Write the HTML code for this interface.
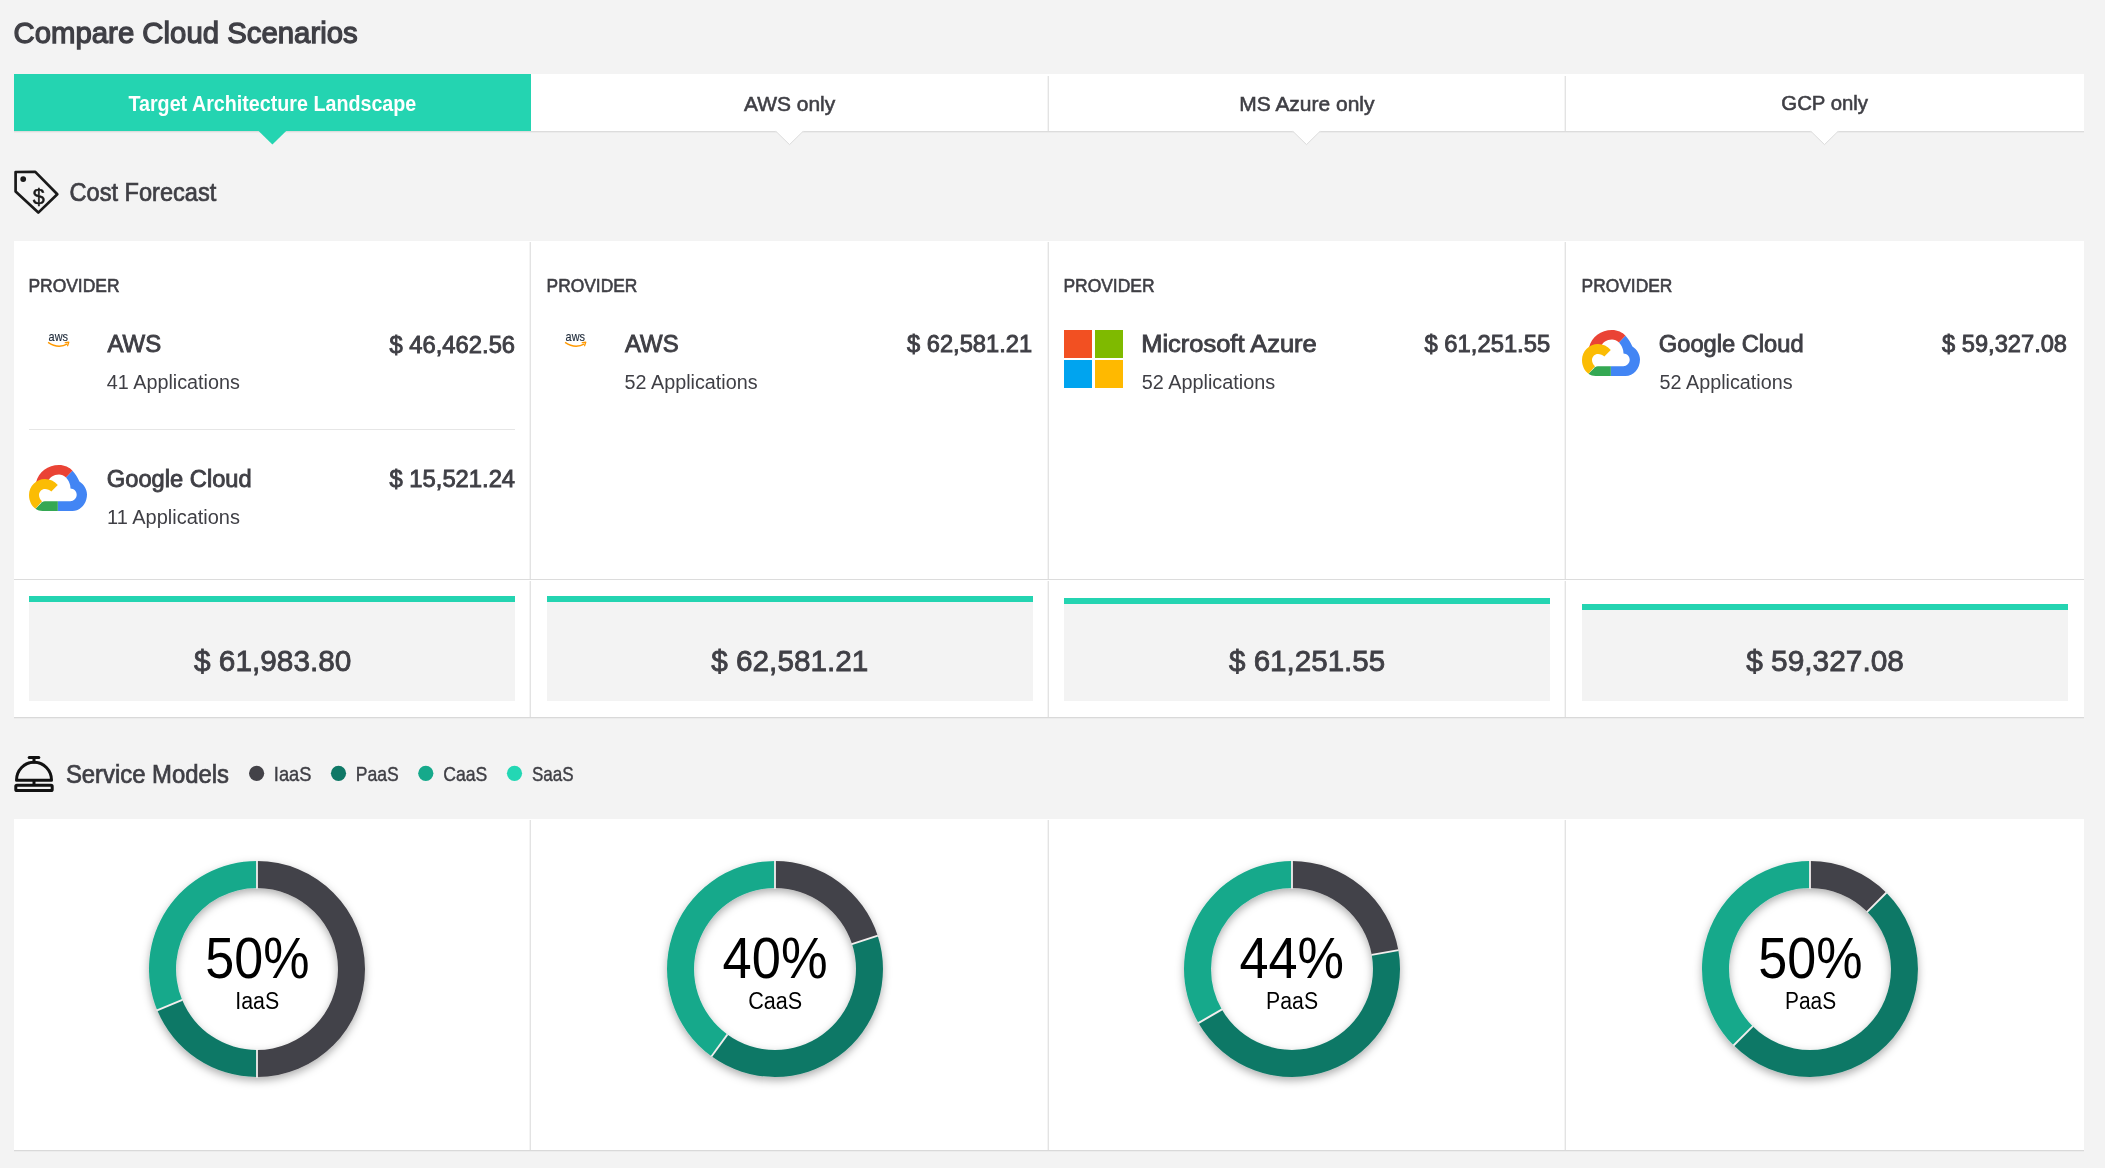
<!DOCTYPE html>
<html><head><meta charset="utf-8"><title>Compare Cloud Scenarios</title>
<style>html,body{margin:0;padding:0;background:#f3f3f3;overflow:hidden}svg{display:block;will-change:transform}text{font-family:"Liberation Sans",sans-serif}</style>
</head><body>
<svg width="2105" height="1168" viewBox="0 0 2105 1168">
<defs><filter id="ds" x="-20%" y="-20%" width="140%" height="140%"><feDropShadow dx="0" dy="3.5" stdDeviation="4" flood-color="#000" flood-opacity="0.32"/></filter></defs>
<rect width="2105" height="1168" fill="#f3f3f3"/>
<rect x="14" y="74" width="2070" height="57" fill="#fff"/>
<rect x="14" y="131" width="2070" height="1" fill="#dcdcdc"/>
<rect x="14" y="132" width="2070" height="1" fill="#ebebeb"/>
<rect x="14" y="74" width="517" height="57" fill="#24d4b1"/>
<rect x="1048" y="76" width="1" height="55" fill="#e3e3e3"/><rect x="1047" y="76" width="1" height="55" fill="#f4f4f4"/>
<rect x="1565" y="76" width="1" height="55" fill="#e3e3e3"/><rect x="1564" y="76" width="1" height="55" fill="#f4f4f4"/>
<path d="M258.6 131 L272.4 144.4 L286.2 131 Z" fill="#24d4b1"/>
<path d="M775.3 131 L789.5 144.6 L803.7 131 Z" fill="#fff"/>
<path d="M775.9 131.3 L789.5 144.6 L803.1 131.3" fill="none" stroke="#dcdcdc" stroke-width="1"/>
<path d="M1292.3 131 L1306.5 144.6 L1320.7 131 Z" fill="#fff"/>
<path d="M1292.9 131.3 L1306.5 144.6 L1320.1 131.3" fill="none" stroke="#dcdcdc" stroke-width="1"/>
<path d="M1810.3 131 L1824.5 144.6 L1838.7 131 Z" fill="#fff"/>
<path d="M1810.9 131.3 L1824.5 144.6 L1838.1 131.3" fill="none" stroke="#dcdcdc" stroke-width="1"/>
<g fill="none" stroke="#1a1a1a" stroke-width="2.7" stroke-linejoin="round"><path d="M15.6 172 L35.3 171.9 L57.3 194.2 L38.3 212.6 L15.6 191.4 Z"/></g>
<circle cx="23.2" cy="179.1" r="2.9" fill="#1a1a1a"/>
<text x="38.8" y="204.3" font-size="21.5" fill="#1a1a1a" text-anchor="middle" font-weight="normal" stroke="#1a1a1a" stroke-width="0.5">$</text>
<rect x="14" y="241" width="2070" height="476" fill="#fff"/>
<rect x="14" y="717" width="2070" height="1" fill="#d9d9d9"/>
<rect x="14" y="718" width="2070" height="1" fill="#ececec"/>
<rect x="530" y="242" width="1" height="337" fill="#e3e3e3"/><rect x="529" y="242" width="1" height="337" fill="#f4f4f4"/>
<rect x="530" y="581" width="1" height="136" fill="#e3e3e3"/><rect x="529" y="581" width="1" height="136" fill="#f4f4f4"/>
<rect x="1048" y="242" width="1" height="337" fill="#e3e3e3"/><rect x="1047" y="242" width="1" height="337" fill="#f4f4f4"/>
<rect x="1048" y="581" width="1" height="136" fill="#e3e3e3"/><rect x="1047" y="581" width="1" height="136" fill="#f4f4f4"/>
<rect x="1565" y="242" width="1" height="337" fill="#e3e3e3"/><rect x="1564" y="242" width="1" height="337" fill="#f4f4f4"/>
<rect x="1565" y="581" width="1" height="136" fill="#e3e3e3"/><rect x="1564" y="581" width="1" height="136" fill="#f4f4f4"/>
<rect x="14" y="579" width="2070" height="1" fill="#dcdcdc"/>
<rect x="29" y="429" width="486" height="1" fill="#e6e6e6"/>
<text x="48.6" y="340.7" font-size="13.2" fill="#232f3e" textLength="19.4" lengthAdjust="spacingAndGlyphs" stroke="#232f3e" stroke-width="0.15">aws</text>
<path d="M48.1 342.3 Q58.0 349.3 67.5 343.9" fill="none" stroke="#f90" stroke-width="1.5"/>
<path d="M65.2 342.6 L68.8 342.2 L67.6 345.8" fill="none" stroke="#f90" stroke-width="1.2" stroke-linecap="round" stroke-linejoin="round"/>
<text x="565.6" y="340.7" font-size="13.2" fill="#232f3e" textLength="19.4" lengthAdjust="spacingAndGlyphs" stroke="#232f3e" stroke-width="0.15">aws</text>
<path d="M565.1 342.3 Q575.0 349.3 584.5 343.9" fill="none" stroke="#f90" stroke-width="1.5"/>
<path d="M582.2 342.6 L585.8 342.2 L584.6 345.8" fill="none" stroke="#f90" stroke-width="1.2" stroke-linecap="round" stroke-linejoin="round"/>
<rect x="1064" y="330" width="28" height="28" fill="#f25022"/>
<rect x="1095" y="330" width="28" height="28" fill="#7fba00"/>
<rect x="1064" y="360" width="28" height="28" fill="#00a4ef"/>
<rect x="1095" y="360" width="28" height="28" fill="#ffb900"/>
<g transform="translate(29.0 465.0)"><path d="M7 17.5 C9.5 7 19 0 30 0 C35.5 0 40.5 2.2 43.5 5.8 L37 12.4 C35 10.5 32.5 9.5 30 9.5 C24.5 9.5 20.5 12.5 19 16.5 Z" fill="#ea4335"/><path d="M43.5 5.8 C46.5 9 48.5 12.5 50.4 16.5 C55 19.5 58 24.3 58 29.5 C58 38.5 51.5 46 43.5 46 L28.8 46 L28.8 36.2 L41.3 36.2 C44.8 36.2 47.7 33.3 47.7 29.8 C47.7 26.3 44.8 23.5 41.5 23.5 L41.2 20.5 C40.5 17.2 39 14.5 37 12.4 Z" fill="#4285f4"/><path d="M28.8 46 L13.5 46 C11 46 8.5 45.3 6.5 43.8 L13 37.3 C13.8 36.6 14.8 36.2 16 36.2 L28.8 36.2 Z" fill="#34a853"/><path d="M6.5 43.8 C2.5 40.8 0 35.8 0 30 C0 21.2 7.2 14 16 14 C21 14 25.5 16.3 28.8 20 L22.3 26.6 C20.8 24.9 18.5 24 16 24 C12.7 24 10 26.7 10 30 C10 32.6 11.3 34.8 13 36.2 Z" fill="#fbbc04"/></g>
<g transform="translate(1582.0 330.0)"><path d="M7 17.5 C9.5 7 19 0 30 0 C35.5 0 40.5 2.2 43.5 5.8 L37 12.4 C35 10.5 32.5 9.5 30 9.5 C24.5 9.5 20.5 12.5 19 16.5 Z" fill="#ea4335"/><path d="M43.5 5.8 C46.5 9 48.5 12.5 50.4 16.5 C55 19.5 58 24.3 58 29.5 C58 38.5 51.5 46 43.5 46 L28.8 46 L28.8 36.2 L41.3 36.2 C44.8 36.2 47.7 33.3 47.7 29.8 C47.7 26.3 44.8 23.5 41.5 23.5 L41.2 20.5 C40.5 17.2 39 14.5 37 12.4 Z" fill="#4285f4"/><path d="M28.8 46 L13.5 46 C11 46 8.5 45.3 6.5 43.8 L13 37.3 C13.8 36.6 14.8 36.2 16 36.2 L28.8 36.2 Z" fill="#34a853"/><path d="M6.5 43.8 C2.5 40.8 0 35.8 0 30 C0 21.2 7.2 14 16 14 C21 14 25.5 16.3 28.8 20 L22.3 26.6 C20.8 24.9 18.5 24 16 24 C12.7 24 10 26.7 10 30 C10 32.6 11.3 34.8 13 36.2 Z" fill="#fbbc04"/></g>
<rect x="29" y="596" width="486" height="105" fill="#f3f3f3"/>
<rect x="29" y="596" width="486" height="6" fill="#24d4b1"/>
<rect x="547" y="596" width="486" height="105" fill="#f3f3f3"/>
<rect x="547" y="596" width="486" height="6" fill="#24d4b1"/>
<rect x="1064" y="598" width="486" height="103" fill="#f3f3f3"/>
<rect x="1064" y="598" width="486" height="6" fill="#24d4b1"/>
<rect x="1582" y="604" width="486" height="97" fill="#f3f3f3"/>
<rect x="1582" y="604" width="486" height="6" fill="#24d4b1"/>
<g fill="none" stroke="#111" stroke-width="3" stroke-linecap="round" stroke-linejoin="round"><path d="M29.2 757.5 H38.8"/><path d="M34 758 V762"/><path d="M16.5 780.2 A17.5 18 0 0 1 51.5 780.2 Z"/><path d="M34 781.5 V784.5"/><rect x="15.8" y="785.3" width="36.4" height="5.3" rx="1.2"/></g>
<circle cx="256.6" cy="773.3" r="7.6" fill="#434248"/>
<circle cx="338.5" cy="773.3" r="7.6" fill="#0f7866"/>
<circle cx="425.8" cy="773.3" r="7.6" fill="#16a98b"/>
<circle cx="514.5" cy="773.3" r="7.6" fill="#23d7b4"/>
<rect x="14" y="819" width="2070" height="331" fill="#fff"/>
<rect x="14" y="1150" width="2070" height="1" fill="#d9d9d9"/>
<rect x="14" y="1151" width="2070" height="1" fill="#ececec"/>
<rect x="530" y="820" width="1" height="330" fill="#e3e3e3"/><rect x="529" y="820" width="1" height="330" fill="#f4f4f4"/>
<rect x="1048" y="820" width="1" height="330" fill="#e3e3e3"/><rect x="1047" y="820" width="1" height="330" fill="#f4f4f4"/>
<rect x="1565" y="820" width="1" height="330" fill="#e3e3e3"/><rect x="1564" y="820" width="1" height="330" fill="#f4f4f4"/>
<g filter="url(#ds)"><path d="M257.00 861.00 A108 108 0 0 1 257.00 1077.00 L257.00 1050.00 A81 81 0 0 0 257.00 888.00 Z" fill="#434248"/><path d="M257.00 1077.00 A108 108 0 0 1 157.22 1010.33 L182.17 1000.00 A81 81 0 0 0 257.00 1050.00 Z" fill="#0f7866"/><path d="M157.22 1010.33 A108 108 0 0 1 257.00 861.00 L257.00 888.00 A81 81 0 0 0 182.17 1000.00 Z" fill="#16a98b"/><line x1="257.00" y1="888.20" x2="257.00" y2="860.80" stroke="#f3eeee" stroke-width="1.8"/><line x1="257.00" y1="1049.80" x2="257.00" y2="1077.20" stroke="#f3eeee" stroke-width="1.8"/><line x1="182.35" y1="999.92" x2="157.04" y2="1010.41" stroke="#f3eeee" stroke-width="1.8"/></g>
<g filter="url(#ds)"><path d="M775.00 861.00 A108 108 0 0 1 877.71 935.63 L852.04 943.97 A81 81 0 0 0 775.00 888.00 Z" fill="#434248"/><path d="M877.71 935.63 A108 108 0 0 1 711.52 1056.37 L727.39 1034.53 A81 81 0 0 0 852.04 943.97 Z" fill="#0f7866"/><path d="M711.52 1056.37 A108 108 0 0 1 775.00 861.00 L775.00 888.00 A81 81 0 0 0 727.39 1034.53 Z" fill="#16a98b"/><line x1="775.00" y1="888.20" x2="775.00" y2="860.80" stroke="#f3eeee" stroke-width="1.8"/><line x1="851.85" y1="944.03" x2="877.90" y2="935.56" stroke="#f3eeee" stroke-width="1.8"/><line x1="727.51" y1="1034.37" x2="711.40" y2="1056.54" stroke="#f3eeee" stroke-width="1.8"/></g>
<g filter="url(#ds)"><path d="M1292.00 861.00 A108 108 0 0 1 1398.36 950.25 L1371.77 954.93 A81 81 0 0 0 1292.00 888.00 Z" fill="#434248"/><path d="M1398.36 950.25 A108 108 0 0 1 1198.47 1023.00 L1221.85 1009.50 A81 81 0 0 0 1371.77 954.93 Z" fill="#0f7866"/><path d="M1198.47 1023.00 A108 108 0 0 1 1292.00 861.00 L1292.00 888.00 A81 81 0 0 0 1221.85 1009.50 Z" fill="#16a98b"/><line x1="1292.00" y1="888.20" x2="1292.00" y2="860.80" stroke="#f3eeee" stroke-width="1.8"/><line x1="1371.57" y1="954.97" x2="1398.56" y2="950.21" stroke="#f3eeee" stroke-width="1.8"/><line x1="1222.03" y1="1009.40" x2="1198.30" y2="1023.10" stroke="#f3eeee" stroke-width="1.8"/></g>
<g filter="url(#ds)"><path d="M1810.00 861.00 A108 108 0 0 1 1886.37 892.63 L1867.28 911.72 A81 81 0 0 0 1810.00 888.00 Z" fill="#434248"/><path d="M1886.37 892.63 A108 108 0 0 1 1733.63 1045.37 L1752.72 1026.28 A81 81 0 0 0 1867.28 911.72 Z" fill="#0f7866"/><path d="M1733.63 1045.37 A108 108 0 0 1 1810.00 861.00 L1810.00 888.00 A81 81 0 0 0 1752.72 1026.28 Z" fill="#16a98b"/><line x1="1810.00" y1="888.20" x2="1810.00" y2="860.80" stroke="#f3eeee" stroke-width="1.8"/><line x1="1867.13" y1="911.87" x2="1886.51" y2="892.49" stroke="#f3eeee" stroke-width="1.8"/><line x1="1752.87" y1="1026.13" x2="1733.49" y2="1045.51" stroke="#f3eeee" stroke-width="1.8"/></g>
<text x="13.50" y="43.25" font-size="30.38" font-weight="normal" fill="#3f3f45" stroke="#3f3f45" stroke-width="1.30" textLength="344.20" lengthAdjust="spacingAndGlyphs">Compare Cloud Scenarios</text>
<text x="128.44" y="110.60" font-size="21.95" font-weight="bold" fill="#ffffff" textLength="287.85" lengthAdjust="spacingAndGlyphs">Target Architecture Landscape</text>
<text x="744.00" y="110.60" font-size="21.08" font-weight="normal" fill="#3f3f45" stroke="#3f3f45" stroke-width="0.60" textLength="91.18" lengthAdjust="spacingAndGlyphs">AWS only</text>
<text x="1239.28" y="110.50" font-size="21.08" font-weight="normal" fill="#3f3f45" stroke="#3f3f45" stroke-width="0.60" textLength="135.19" lengthAdjust="spacingAndGlyphs">MS Azure only</text>
<text x="1781.32" y="110.40" font-size="21.08" font-weight="normal" fill="#3f3f45" stroke="#3f3f45" stroke-width="0.60" textLength="86.70" lengthAdjust="spacingAndGlyphs">GCP only</text>
<text x="69.56" y="201.45" font-size="25.00" font-weight="normal" fill="#3f3f45" stroke="#3f3f45" stroke-width="0.70" textLength="146.75" lengthAdjust="spacingAndGlyphs">Cost Forecast</text>
<text x="28.38" y="291.70" font-size="19.04" font-weight="normal" fill="#3f3f45" stroke="#3f3f45" stroke-width="0.60" textLength="91.21" lengthAdjust="spacingAndGlyphs">PROVIDER</text>
<text x="546.56" y="291.70" font-size="19.04" font-weight="normal" fill="#3f3f45" stroke="#3f3f45" stroke-width="0.60" textLength="90.84" lengthAdjust="spacingAndGlyphs">PROVIDER</text>
<text x="1063.38" y="291.70" font-size="19.04" font-weight="normal" fill="#3f3f45" stroke="#3f3f45" stroke-width="0.60" textLength="91.21" lengthAdjust="spacingAndGlyphs">PROVIDER</text>
<text x="1581.56" y="291.70" font-size="19.04" font-weight="normal" fill="#3f3f45" stroke="#3f3f45" stroke-width="0.60" textLength="90.84" lengthAdjust="spacingAndGlyphs">PROVIDER</text>
<text x="107.54" y="352.35" font-size="24.42" font-weight="normal" fill="#3f3f45" stroke="#3f3f45" stroke-width="0.90" textLength="53.65" lengthAdjust="spacingAndGlyphs">AWS</text>
<text x="625.02" y="352.35" font-size="24.42" font-weight="normal" fill="#3f3f45" stroke="#3f3f45" stroke-width="0.90" textLength="53.61" lengthAdjust="spacingAndGlyphs">AWS</text>
<text x="1141.22" y="352.35" font-size="24.42" font-weight="normal" fill="#3f3f45" stroke="#3f3f45" stroke-width="0.90" textLength="175.47" lengthAdjust="spacingAndGlyphs">Microsoft Azure</text>
<text x="1658.82" y="352.35" font-size="24.42" font-weight="normal" fill="#3f3f45" stroke="#3f3f45" stroke-width="0.90" textLength="144.81" lengthAdjust="spacingAndGlyphs">Google Cloud</text>
<text x="106.86" y="487.35" font-size="24.42" font-weight="normal" fill="#3f3f45" stroke="#3f3f45" stroke-width="0.90" textLength="144.80" lengthAdjust="spacingAndGlyphs">Google Cloud</text>
<text x="106.84" y="388.80" font-size="19.91" font-weight="normal" fill="#3f3f45" textLength="133.08" lengthAdjust="spacingAndGlyphs">41 Applications</text>
<text x="624.60" y="388.80" font-size="19.91" font-weight="normal" fill="#3f3f45" textLength="133.03" lengthAdjust="spacingAndGlyphs">52 Applications</text>
<text x="1141.72" y="388.80" font-size="19.91" font-weight="normal" fill="#3f3f45" textLength="133.48" lengthAdjust="spacingAndGlyphs">52 Applications</text>
<text x="1659.60" y="388.80" font-size="19.91" font-weight="normal" fill="#3f3f45" textLength="133.03" lengthAdjust="spacingAndGlyphs">52 Applications</text>
<text x="107.04" y="523.80" font-size="19.91" font-weight="normal" fill="#3f3f45" textLength="132.91" lengthAdjust="spacingAndGlyphs">11 Applications</text>
<text x="389.52" y="352.75" font-size="23.98" font-weight="normal" fill="#3f3f45" stroke="#3f3f45" stroke-width="0.90" textLength="125.55" lengthAdjust="spacingAndGlyphs">$ 46,462.56</text>
<text x="389.52" y="487.25" font-size="23.98" font-weight="normal" fill="#3f3f45" stroke="#3f3f45" stroke-width="0.90" textLength="125.56" lengthAdjust="spacingAndGlyphs">$ 15,521.24</text>
<text x="907.00" y="352.35" font-size="23.98" font-weight="normal" fill="#3f3f45" stroke="#3f3f45" stroke-width="0.90" textLength="125.10" lengthAdjust="spacingAndGlyphs">$ 62,581.21</text>
<text x="1424.52" y="352.35" font-size="23.98" font-weight="normal" fill="#3f3f45" stroke="#3f3f45" stroke-width="0.90" textLength="125.67" lengthAdjust="spacingAndGlyphs">$ 61,251.55</text>
<text x="1942.02" y="352.35" font-size="23.98" font-weight="normal" fill="#3f3f45" stroke="#3f3f45" stroke-width="0.90" textLength="125.01" lengthAdjust="spacingAndGlyphs">$ 59,327.08</text>
<text x="194.00" y="671.18" font-size="30.31" font-weight="normal" fill="#3f3f45" stroke="#3f3f45" stroke-width="0.85" textLength="157.45" lengthAdjust="spacingAndGlyphs">$ 61,983.80</text>
<text x="711.24" y="671.18" font-size="30.31" font-weight="normal" fill="#3f3f45" stroke="#3f3f45" stroke-width="0.85" textLength="157.14" lengthAdjust="spacingAndGlyphs">$ 62,581.21</text>
<text x="1229.00" y="671.18" font-size="30.31" font-weight="normal" fill="#3f3f45" stroke="#3f3f45" stroke-width="0.85" textLength="156.19" lengthAdjust="spacingAndGlyphs">$ 61,251.55</text>
<text x="1746.24" y="671.18" font-size="30.31" font-weight="normal" fill="#3f3f45" stroke="#3f3f45" stroke-width="0.85" textLength="157.64" lengthAdjust="spacingAndGlyphs">$ 59,327.08</text>
<text x="65.88" y="783.35" font-size="25.00" font-weight="normal" fill="#3f3f45" stroke="#3f3f45" stroke-width="0.70" textLength="163.16" lengthAdjust="spacingAndGlyphs">Service Models</text>
<text x="273.84" y="780.60" font-size="20.49" font-weight="normal" fill="#3f3f45" stroke="#3f3f45" stroke-width="0.40" textLength="37.60" lengthAdjust="spacingAndGlyphs">IaaS</text>
<text x="355.72" y="780.60" font-size="20.49" font-weight="normal" fill="#3f3f45" stroke="#3f3f45" stroke-width="0.40" textLength="43.02" lengthAdjust="spacingAndGlyphs">PaaS</text>
<text x="443.16" y="780.60" font-size="20.49" font-weight="normal" fill="#3f3f45" stroke="#3f3f45" stroke-width="0.40" textLength="44.09" lengthAdjust="spacingAndGlyphs">CaaS</text>
<text x="531.88" y="780.60" font-size="20.49" font-weight="normal" fill="#3f3f45" stroke="#3f3f45" stroke-width="0.40" textLength="41.64" lengthAdjust="spacingAndGlyphs">SaaS</text>
<text x="205.28" y="978.00" font-size="56.83" font-weight="normal" fill="#000000" textLength="104.24" lengthAdjust="spacingAndGlyphs">50%</text>
<text x="722.60" y="978.00" font-size="56.83" font-weight="normal" fill="#000000" textLength="104.96" lengthAdjust="spacingAndGlyphs">40%</text>
<text x="1239.44" y="978.00" font-size="56.83" font-weight="normal" fill="#000000" textLength="104.48" lengthAdjust="spacingAndGlyphs">44%</text>
<text x="1758.28" y="978.00" font-size="56.83" font-weight="normal" fill="#000000" textLength="104.24" lengthAdjust="spacingAndGlyphs">50%</text>
<text x="235.28" y="1008.80" font-size="24.42" font-weight="normal" fill="#000000" textLength="43.96" lengthAdjust="spacingAndGlyphs">IaaS</text>
<text x="748.28" y="1008.80" font-size="24.42" font-weight="normal" fill="#000000" textLength="54.01" lengthAdjust="spacingAndGlyphs">CaaS</text>
<text x="1266.12" y="1008.80" font-size="24.42" font-weight="normal" fill="#000000" textLength="51.99" lengthAdjust="spacingAndGlyphs">PaaS</text>
<text x="1785.04" y="1008.80" font-size="24.42" font-weight="normal" fill="#000000" textLength="51.13" lengthAdjust="spacingAndGlyphs">PaaS</text>
</svg>
</body></html>
